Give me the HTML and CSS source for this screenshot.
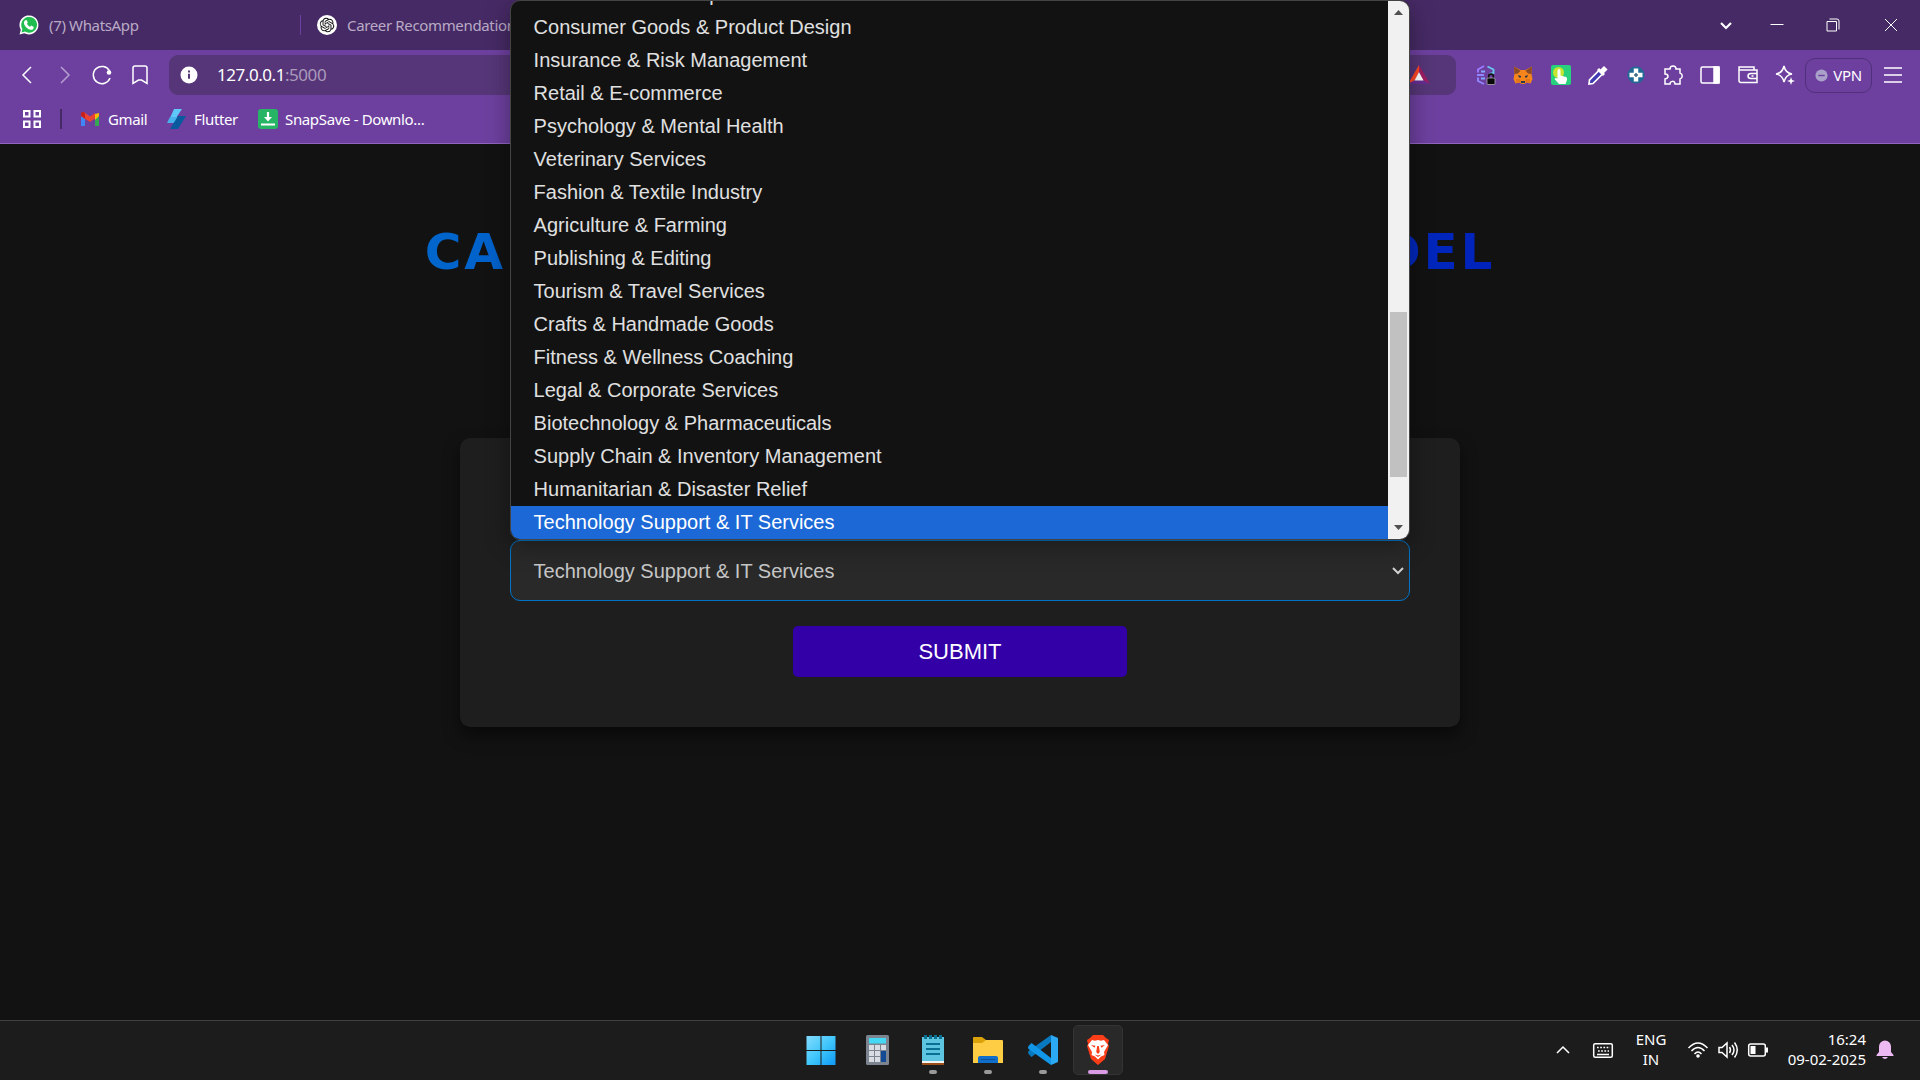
FILE: index.html
```html
<!DOCTYPE html>
<html lang="en">
<head>
<meta charset="utf-8">
<title>Career Recommendation Model</title>
<link rel="stylesheet" href="styles.css">
</head>
<body>
<div class="screen">
  <header class="browser">
    <div class="tabs">
      <div class="tab tab-first">
        <svg class="i20" viewBox="0 0 20 20"><path fill="#fff" d="M.5 19.5 1.8 14.800A9.500 9.500 0 1 1 5.300 18.200Z"/><path fill="#1fbe4f" d="M2.500 17.500 3.400 14A7.900 7.900 0 1 1 6 16.600Z"/><path fill="#fff" d="M6.300 5.200 7.500 5l1.300 2.600-.8 1.200c.7 1.400 1.600 2.300 3.100 3l1.200-1.200 2.500 1.300c0 2-1.400 3-3 2.900-3.400-.5-6.500-3.500-6.900-6.700 0-1.200.5-2.200 1.400-2.900Z"/></svg>
        <span>(7) WhatsApp</span>
      </div>
      <div class="tab tab-second">
        <svg class="i20" viewBox="0 0 20 20"><circle cx="10" cy="10" r="10" fill="#fff"/><path fill="#111" transform="translate(2.700 2.700) scale(.608)" d="M22.2819 9.8211a5.9847 5.9847 0 0 0-.5157-4.9108 6.0462 6.0462 0 0 0-6.5098-2.9A6.0651 6.0651 0 0 0 4.9807 4.1818a5.9847 5.9847 0 0 0-3.9977 2.9 6.0462 6.0462 0 0 0 .7427 7.0966 5.98 5.98 0 0 0 .511 4.9107 6.051 6.051 0 0 0 6.5146 2.9001A5.9847 5.9847 0 0 0 13.2599 24a6.0557 6.0557 0 0 0 5.7718-4.2058 5.9894 5.9894 0 0 0 3.9977-2.9001 6.0557 6.0557 0 0 0-.7475-7.0729zm-9.022 12.6081a4.4755 4.4755 0 0 1-2.8764-1.0408l.1419-.0804 4.7783-2.7582a.7948.7948 0 0 0 .3927-.6813v-6.7369l2.02 1.1686a.071.071 0 0 1 .038.052v5.5826a4.504 4.504 0 0 1-4.4945 4.4944zm-9.6607-4.1254a4.4708 4.4708 0 0 1-.5346-3.0137l.142.0852 4.783 2.7582a.7712.7712 0 0 0 .7806 0l5.8428-3.3685v2.3324a.0804.0804 0 0 1-.0332.0615L9.74 19.9502a4.4992 4.4992 0 0 1-6.1408-1.6464zM2.3408 7.8956a4.485 4.485 0 0 1 2.3655-1.9728V11.6a.7664.7664 0 0 0 .3879.6765l5.8144 3.3543-2.0201 1.1685a.0757.0757 0 0 1-.071 0l-4.8303-2.7865A4.504 4.504 0 0 1 2.3408 7.872zm16.5963 3.8558L13.1038 8.364 15.1192 7.2a.0757.0757 0 0 1 .071 0l4.8303 2.7913a4.4944 4.4944 0 0 1-.6765 8.1042v-5.6772a.79.79 0 0 0-.407-.667zm2.0107-3.0231l-.142-.0852-4.7735-2.7818a.7759.7759 0 0 0-.7854 0L9.409 9.2297V6.8974a.0662.0662 0 0 1 .0284-.0615l4.8303-2.7866a4.4992 4.4992 0 0 1 6.6802 4.66zM8.3065 12.863l-2.02-1.1638a.0804.0804 0 0 1-.038-.0567V6.0742a4.4992 4.4992 0 0 1 7.3757-3.4537l-.142.0805L8.704 5.459a.7948.7948 0 0 0-.3927.6813zm1.0976-2.3654l2.602-1.4998 2.6069 1.4998v2.9994l-2.5974 1.4997-2.6067-1.4997Z"/></svg>
        <span>Career Recommendation</span>
      </div>
      <div class="window-controls">
        <svg viewBox="0 0 14 14"><path d="m2 5 5 5 5-5" stroke-width="2.200"/></svg>
        <svg class="minimize" viewBox="0 0 14 14"><path d="M.5 6.500h13"/></svg>
        <svg class="restore" viewBox="0 0 14 14"><path d="M1 3.500h9.500v9.500H1zM3.500 1H11a2 2 0 0 1 2 2v8.500"/></svg>
        <svg class="close" viewBox="0 0 14 14"><path d="m1 1 12 12M13 1 1 13"/></svg>
      </div>
    </div>
    <div class="toolbar">
      <div class="nav">
        <svg viewBox="0 0 20 20"><path d="m14 2-8 8 8 8"/></svg>
        <svg class="dim" viewBox="0 0 20 20"><path d="m6 2 8 8-8 8"/></svg>
        <svg viewBox="0 0 20 20"><path d="M17.500 6A8.600 8.600 0 1 0 18 13"/><circle cx="17" cy="7.500" r="2.300" fill="#fff" stroke="none"/></svg>
        <svg viewBox="0 0 20 20"><path d="M5 1h10q2 0 2 2v15.500l-5.500-3.500h-3L3 18.500V3q0-2 2-2Z"/></svg>
      </div>
      <div class="address">
        <svg class="info" viewBox="0 0 18 18"><circle cx="9" cy="9" r="8.500" fill="#fff"/><path d="M9 4.500v2M9 7.800v5" stroke="#563678" stroke-width="2"/></svg>
        <span class="url">127.0.0.1<span>:5000</span></span>
        <svg class="bat" viewBox="0 0 22 20"><path fill="#ff4724" d="M11 0 0 19 7 15.500 11 7Z"/><path fill="#9e1f63" d="M11 0 22 19 15 15.500 11 7Z"/><path fill="#662d91" d="m0 19 7-4h8l7 4Z"/><path fill="#fff" d="m11 7 4.500 8.500h-9Z"/></svg>
      </div>
      <div class="extensions">
        <svg viewBox="0 0 20 20"><g stroke-width="1.900"><path stroke="#9b7cff" d="M8 1 2 4.500v3"/><path stroke="#8f86ff" d="M1 10h7M2 12.500v3.500l6 3"/><path stroke="#80a7ff" d="M5 6.500h4M5 13.500h4"/><path stroke="#68c7ed" d="m11.500 1.500 6 3v3.500l-4 1"/></g><path d="M12.700 13v-1.500a2.300 2.300 0 0 1 4.600 0V13" stroke="#111" stroke-width="1.700"/><rect x="11" y="13" width="8" height="6.500" rx="1" fill="#080808" stroke="#bbb" stroke-width=".7"/></svg>
        <svg class="solid" viewBox="0 0 20 20"><path fill="#f6851b" d="M1 1.500 7.500 5h5L19 1.500 18.500 9l1 5-2 4.500-4-1L11.500 19h-3l-2-1.500-4 1L.5 14l1-5Z"/><path fill="#8b4b24" d="m1 1.500 6.500 4.300L5 8.500 1.500 9ZM19 1.500l-6.500 4.300L15 8.500l3.500.5Z"/><path fill="#e2761b" d="m3 14 4 0 1 3-5 1ZM17 14h-4l-1 3 5 1Z"/><path fill="#263a4b" d="m5 10 3 1v1.500H6ZM15 10l-3 1v1.500h2ZM8 16h4v2H8Z"/></svg>
        <svg class="solid" viewBox="0 0 20 20"><rect width="20" height="20" rx="2" fill="#28d17c"/><circle cx="7.500" cy="7.500" r="5.500" fill="#c6e52f"/><path fill="#fff" d="M6.500 5.500a1.500 1.500 0 0 1 3 0V10.500l5.500 1.500q1.500.5 1 3L14.500 19H8l-4.500-5 1-1 2 .5Z"/></svg>
        <svg viewBox="0 0 20 20"><path d="m1 19 .5-4L11 5.500l3.500 3.500L5 18.500Z" fill="#403bb3" stroke-width="1.700"/><path d="m10 4 6 6M12.500 6.500 16 3l1.500 1.500L14 8" stroke-width="3"/></svg>
        <svg viewBox="0 0 20 20"><circle cx="10" cy="10" r="8.500" fill="#206995" stroke="none"/><path d="M10 3.500v13M3.500 10h13" stroke-width="4.500"/><path d="M8 10h4M10 8v4" stroke="#386a85"/></svg>
        <svg viewBox="0 0 20 20"><path d="M4 4h3c0-4 6-4 6 0h4v4c3 1 3 5 0 6v5h-5c0-4-5-3-5 0H2v-5c4-.5 4-5 0-5V4Z"/></svg>
        <svg viewBox="0 0 20 20"><rect x="1" y="2" width="18" height="16" rx="1.500"/><path fill="#fff" d="M14 2h5v16h-5Z"/></svg>
        <svg viewBox="0 0 20 20"><path d="M1 5V2h15v3M1 5h18v12.500H3q-2 0-2-2ZM19 8.500h-6q-3 0-3 2.500t3 2.500h6M13.500 11h2"/></svg>
        <svg viewBox="0 0 20 20"><path d="M9 1q1.500 7 8 8-6.500 1-8 8-1.500-7-8-8Q7.500 8 9 1Z"/><path d="m16 12 1 3 3 1-3 1-1 3-1-3-3-1 3-1Z" fill="#fff" stroke="none"/></svg>
      </div>
      <div class="vpn"><svg viewBox="0 0 14 14"><circle cx="7" cy="7" r="6.500" fill="#aaa1ca"/><path d="M3.500 7h7" stroke="#6d409f" stroke-width="1.500"/></svg>VPN</div>
      <svg class="menu" viewBox="0 0 18 16"><path d="M0 1h18M0 8h18M0 15h18"/></svg>
    </div>
    <div class="bookmarks">
      <svg class="apps" viewBox="0 0 20 20"><path d="M2 2h5.500v5.500H2zM12.500 2H18v5.500h-5.500zM2 12.500h5.500V18H2zM12.500 12.500H18V18h-5.500z"/></svg>
      <i class="divider"></i>
      <div class="bookmark gmail"><svg viewBox="0 0 20 20"><path fill="#4285f4" d="M1 6v11h4V9Z"/><path fill="#34a853" d="M15 9v8h4V6Z"/><path fill="#fbbc04" d="m15 5 4-1v3l-4 4Z"/><path fill="#ea4335" d="m1 4 3-1 6 4.500L15 4v5.500L10 13 1 7Z"/><path fill="#c5221f" d="M1 4q2-2 4 0v6L1 7Z"/></svg><span>Gmail</span></div>
      <div class="bookmark flutter"><svg viewBox="0 0 20 20"><path fill="#5ec8f8" d="M7 0h8L9 9H3Z"/><path fill="#49b1eb" d="M3 8h9l-4 6H0Z"/><path fill="#075a9d" d="M11 7h8l-8 13H3Z"/></svg><span>Flutter</span></div>
      <div class="bookmark snap"><svg viewBox="0 0 20 20"><rect width="20" height="20" rx="3" fill="#27b565"/><path d="M10 3v7M3 15.500h14" stroke="#fff" stroke-width="2.200"/><path d="M6 8h8l-4 4.500Z" fill="#fff"/></svg><span>SnapSave - Downlo...</span></div>
    </div>
  </header>

  <main class="page">
    <h1>CAREER RECOMMENDATION MODEL</h1>
    <form class="card">
      <div class="field">
        <div class="select"><span>Technology Support &amp; IT Services</span><svg viewBox="0 0 12 8"><path d="m1 1 5 5 5-5"/></svg></div>
        <div class="popup">
          <ul>
            <li>Education &amp; Development</li>
            <li>Consumer Goods &amp; Product Design</li>
            <li>Insurance &amp; Risk Management</li>
            <li>Retail &amp; E-commerce</li>
            <li>Psychology &amp; Mental Health</li>
            <li>Veterinary Services</li>
            <li>Fashion &amp; Textile Industry</li>
            <li>Agriculture &amp; Farming</li>
            <li>Publishing &amp; Editing</li>
            <li>Tourism &amp; Travel Services</li>
            <li>Crafts &amp; Handmade Goods</li>
            <li>Fitness &amp; Wellness Coaching</li>
            <li>Legal &amp; Corporate Services</li>
            <li>Biotechnology &amp; Pharmaceuticals</li>
            <li>Supply Chain &amp; Inventory Management</li>
            <li>Humanitarian &amp; Disaster Relief</li>
            <li class="selected">Technology Support &amp; IT Services</li>
          </ul>
          <div class="scrollbar"><svg viewBox="0 0 9 5"><path d="m0 5 4.500-5L9 5Z"/></svg><i></i><svg viewBox="0 0 9 5"><path d="m0 0 4.500 5L9 0Z"/></svg></div>
        </div>
      </div>
      <button class="submit" type="button">SUBMIT</button>
    </form>
  </main>

  <footer class="taskbar">
    <div class="task-apps">
      <div class="task spaced"><svg viewBox="0 0 32 32"><defs><linearGradient id="win" x1="0" y1="0" x2="32" y2="32" gradientUnits="userSpaceOnUse"><stop stop-color="#8bdefd"/><stop offset=".5" stop-color="#42c7fb"/><stop offset="1" stop-color="#0996f5"/></linearGradient></defs><path fill="url(#win)" d="M1.500 2h14v14h-14zM16.500 2h14v14h-14zM1.500 17h14v14h-14zM16.500 17h14v14h-14z"/></svg></div>
      <div class="task spaced"><svg viewBox="0 0 32 32"><rect x="5" y="1" width="23" height="30" rx="1.500" fill="#7c8490"/><path fill="#45d8f5" d="M8 4h17v5.500H8z"/><path fill="#d9dde3" d="M8 11h5v5H8zM14 11h5v5h-5zM20 11h5v5h-5zM8 17h5v5H8zM14 17h5v5h-5zM8 23h5v5H8zM14 23h5v5h-5z"/><path fill="#124a93" d="M20 17h5v11h-5z"/></svg></div>
      <div class="task open"><svg viewBox="0 0 32 32"><path fill="#9b4f18" d="M5 27h22v4H5z"/><path fill="#f4f4f4" d="M5 26h22v3H5z"/><path fill="#5dc5df" d="M5 3h22v24H5z"/><path d="M9 10h14M9 15h14M9 20h14" stroke="#087092" stroke-width="2"/><path d="M8.500 1v4M13.500 1v4M18.500 1v4M23.500 1v4" stroke="#087092" stroke-width="3"/></svg></div>
      <div class="task open"><svg viewBox="0 0 32 32"><path fill="#dba20a" d="M1 4q0-1 1-1h8l4 3v4H1z"/><path fill="#ffcd43" d="M1 9h9l4-3h16q1 0 1 1v22H1z"/><path fill="#116fc9" d="M6 29v-5q0-2 2-2h16q2 0 2 2v5z"/><path stroke="#08529d" d="M9 25.500h14"/></svg></div>
      <div class="task open"><svg viewBox="0 0 32 32"><path fill="#0879bf" d="m1.500 20 3 3L24 8V1L1.500 17q-1 1.500 0 3Z"/><path fill="#1296e8" d="m1.500 12 3-3L24 24v7L1.500 15q-1-1.500 0-3Z"/><path fill="#2ba9f5" d="m24 1 7 3v24l-7 3Z"/></svg></div>
      <div class="task active"><svg viewBox="0 0 32 32"><path fill="#fb3d18" d="m11 1-3 3-3 2 1 4-1 2 4 13 7 6 7-6 4-13-1-2 1-4-3-2-3-3Z"/><path fill="#fff" d="m10 6 3 .8 3-.8 3 .8L22 6l4 5-4 7 .5 3-3.500 1.500-3 3-3-3L9.500 21l.5-3-4-7Z"/><path fill="#fb3d18" d="m9 11 4.500.8-1 2ZM23 11l-4.500.8 1 2ZM15.200 12h1.600l1 6-1.800 2-1.800-2ZM12.500 20.500l3.500 1 3.500-1-3.500 2.500Z"/></svg></div>
    </div>
    <div class="tray">
      <svg class="chevron" viewBox="0 0 14 8"><path d="m1 7 6-6 6 6"/></svg>
      <svg class="keyboard" viewBox="0 0 20 15"><rect x=".7" y=".7" width="18.600" height="13.600" rx="1.500"/><path d="M4 4.500h13M5 8h11" stroke-dasharray="1.700 1.500"/><path d="M4 11.500h12"/></svg>
      <div class="language">ENG<br>IN</div>
      <svg class="wifi" viewBox="0 0 20 16"><path d="M.5 6q9.500-10 19 0M3.500 9q6.500-7 13 0M6.500 12q3.500-4 7 0"/><circle cx="10" cy="14" r="1.800" fill="#fff" stroke="none"/></svg>
      <svg class="sound" viewBox="0 0 20 18"><path d="M1 6.500h3L9 2v14l-5-4.500H1ZM11.500 6q2 3 0 6M14 4q4 5 0 10M16.500 1.500q5.500 7.500 0 15"/></svg>
      <svg class="battery" viewBox="0 0 20 14"><rect x=".7" y="1" width="16.600" height="12" rx="2"/><path fill="#fff" stroke="none" d="M2.500 3h5v8h-5zM18 4.500h2v5h-2z"/></svg>
      <div class="clock">16:24<br>09-02-2025</div>
      <svg class="bell" viewBox="0 0 18 20"><path fill="#edb9f2" d="M9 .5a6 6 0 0 0-6 6V12L.5 15v1h17v-1L15 12V6.500a6 6 0 0 0-6-6ZM6 17h6q-3 4-6 0Z"/></svg>
    </div>
  </footer>
</div>
</body>
</html>
```
FILE: styles.css
```css
* { box-sizing: border-box; }
body { margin: 0; background: #121212; font-family: "Noto Sans", sans-serif; overflow: hidden; }
svg { display: block; flex: none; overflow: visible; fill: none; }
.screen { width: 1920px; height: 1080px; display: flex; flex-direction: column; overflow: hidden; }
.browser { height: 144px; background: #6d409f; border-bottom: 1px solid #9065bf; color: #fff; flex: none; }
.tabs { height: 50px; background: #462a65; display: flex; align-items: center; font-size: 15px; letter-spacing: -.35px; color: #b9aac6; }
.tab { display: flex; align-items: center; gap: 10px; height: 20px; white-space: nowrap; }
.i20 { width: 20px; height: 20px; }
.tab-first { width: 301px; padding-left: 19px; border-right: 1px solid #6d409f; }
.tab-second { padding-left: 16px; }
.window-controls { margin-left: auto; padding-right: 22px; display: flex; }
.window-controls svg { width: 14px; height: 14px; stroke: #fff; }
.window-controls .minimize { margin-left: 37px; }
.window-controls .restore { margin-left: 42px; }
.window-controls .close { margin-left: 44px; }
.toolbar { height: 50px; display: flex; align-items: center; }
.nav { display: flex; gap: 17.6px; padding-left: 17px; width: 169px; }
.nav svg { width: 20px; height: 20px; stroke: #fff; stroke-width: 1.5; }
.nav .dim { opacity: .5; }
.address { width: 1287px; height: 40px; border-radius: 9px; background: #563678; display: flex; align-items: center; padding: 0 26px 0 11px; }
.info { width: 18px; height: 18px; }
.url { margin: -2px 0 0 19px; font-size: 17px; letter-spacing: -.45px; }
.url span { color: #aa9abc; }
.bat { width: 22px; height: 20px; margin-left: auto; }
.extensions { display: flex; gap: 17.4px; margin-left: 20px; }
.extensions svg { width: 20px; height: 20px; stroke: #fff; stroke-width: 1.5; }
.extensions .solid { stroke: none; }
.vpn { width: 67px; height: 35px; margin-left: 10px; border: 1px solid #4f307a; border-radius: 10px; display: flex; align-items: center; justify-content: center; gap: 5px; font-size: 15px; letter-spacing: -.2px; }
.vpn svg { width: 13px; height: 13px; }
.menu { width: 18px; height: 16px; margin-left: 12px; stroke: #fff; stroke-width: 1.5; }
.bookmarks { height: 38px; display: flex; align-items: center; font-size: 15px; letter-spacing: -.35px; }
.bookmark span { margin-top: -1px; }
.apps { width: 20px; height: 20px; margin-left: 22px; stroke: #fff; stroke-width: 2; }
.divider { width: 2px; height: 20px; background: #462a65; margin-left: 18px; }
.bookmark { display: flex; align-items: center; white-space: nowrap; }
.bookmark svg { width: 20px; height: 20px; }
.gmail { margin-left: 18px; gap: 8px; width: 87px; }
.flutter { gap: 7px; width: 91px; }
.snap { gap: 7px; }
.page { height: 876px; flex: none; display: flex; flex-direction: column; align-items: center; }
h1 { margin: 76px 0 0; height: 64px; white-space: nowrap; font: bold 50px/64px "DejaVu Sans", sans-serif; letter-spacing: 2.75px; color: transparent; background: linear-gradient(90deg, #0066cc, #0022bb); background-clip: text; -webkit-background-clip: text; }
.card { width: 1000px; height: 289px; margin-top: 154px; background: #1e1e1e; border-radius: 10px; box-shadow: 0 8px 16px rgba(0,0,0,.5); padding: 102px 50px 0; display: flex; flex-direction: column; align-items: center; font-family: "Liberation Sans", Arial, sans-serif; }
.field { width: 900px; position: relative; }
.select { height: 61px; border: 1px solid #0074c9; border-radius: 10px; background: #292929; display: flex; align-items: center; justify-content: space-between; padding: 1px 5px 0 22.6px; font-size: 20px; color: #c7c7c7; }
.select svg { width: 12px; height: 8px; stroke: #d0d0d0; stroke-width: 2; }
.popup { position: absolute; left: 0; bottom: 61px; width: 900px; height: 540px; border: 1px solid #444; border-radius: 10px; background: #121212; overflow: hidden; display: flex; box-shadow: 0 6px 24px rgba(0,0,0,.35); }
.popup ul { list-style: none; margin: 0; padding: 0; width: 877px; flex: none; display: flex; flex-direction: column; justify-content: flex-end; }
.popup li { flex: none; height: 33px; line-height: 33px; padding-left: 22.6px; font-size: 20px; color: #e0e0e0; }
.popup .selected { background: #1b68d6; color: #fff; }
.scrollbar { width: 21px; background: #f1f1f1; display: flex; flex-direction: column; align-items: center; padding: 9px 0; }
.scrollbar svg { width: 9px; height: 5px; fill: #505050; }
.scrollbar i { width: 17px; height: 165px; background: #c1c1c1; margin: 297px 0 auto; }
.submit { width: 334px; height: 51px; margin-top: 25px; padding: 0; border: 0; border-radius: 5px; background: #3300a8; color: #fff; font: 22px "Liberation Sans", Arial, sans-serif; }
.taskbar { height: 60px; background: #1c1c1c; border-top: 1px solid #414141; position: relative; display: flex; justify-content: flex-end; flex: none; color: #fff; }
.task-apps { position: absolute; left: 796px; top: 4px; display: flex; gap: 5px; }
.task { width: 50px; height: 50px; display: flex; justify-content: center; padding-top: 9px; border-radius: 5px; position: relative; }
.spaced { margin-right: 1px; }
.task svg { width: 32px; height: 32px; }
.open::after, .active::after { content: ""; position: absolute; left: 21px; bottom: 1px; width: 8px; height: 4px; border-radius: 2px; background: #999; }
.active { background: #292929; border: 1px solid #343434; padding-top: 8px; }
.active::after { left: 14px; bottom: 0; width: 20px; background: #d99be4; }
.tray { display: flex; align-items: center; padding-right: 26px; font-size: 15px; line-height: 20px; }
.tray svg { stroke: #fff; stroke-width: 1.5; margin-top: -1px; }
.tray .chevron { width: 14px; height: 8px; }
.tray .keyboard { width: 20px; height: 15px; margin-left: 23px; }
.language { width: 40px; text-align: center; margin: -3px 0 0 18px; }
.tray .wifi { width: 20px; height: 16px; margin-left: 17px; }
.tray .sound { width: 20px; height: 18px; margin-left: 10px; }
.tray .battery { width: 20px; height: 14px; margin-left: 10px; }
.clock { width: 100px; text-align: right; margin: -4px 0 0 -2px; }
.tray .bell { width: 18px; height: 20px; margin-left: 10px; stroke: none; }
```
